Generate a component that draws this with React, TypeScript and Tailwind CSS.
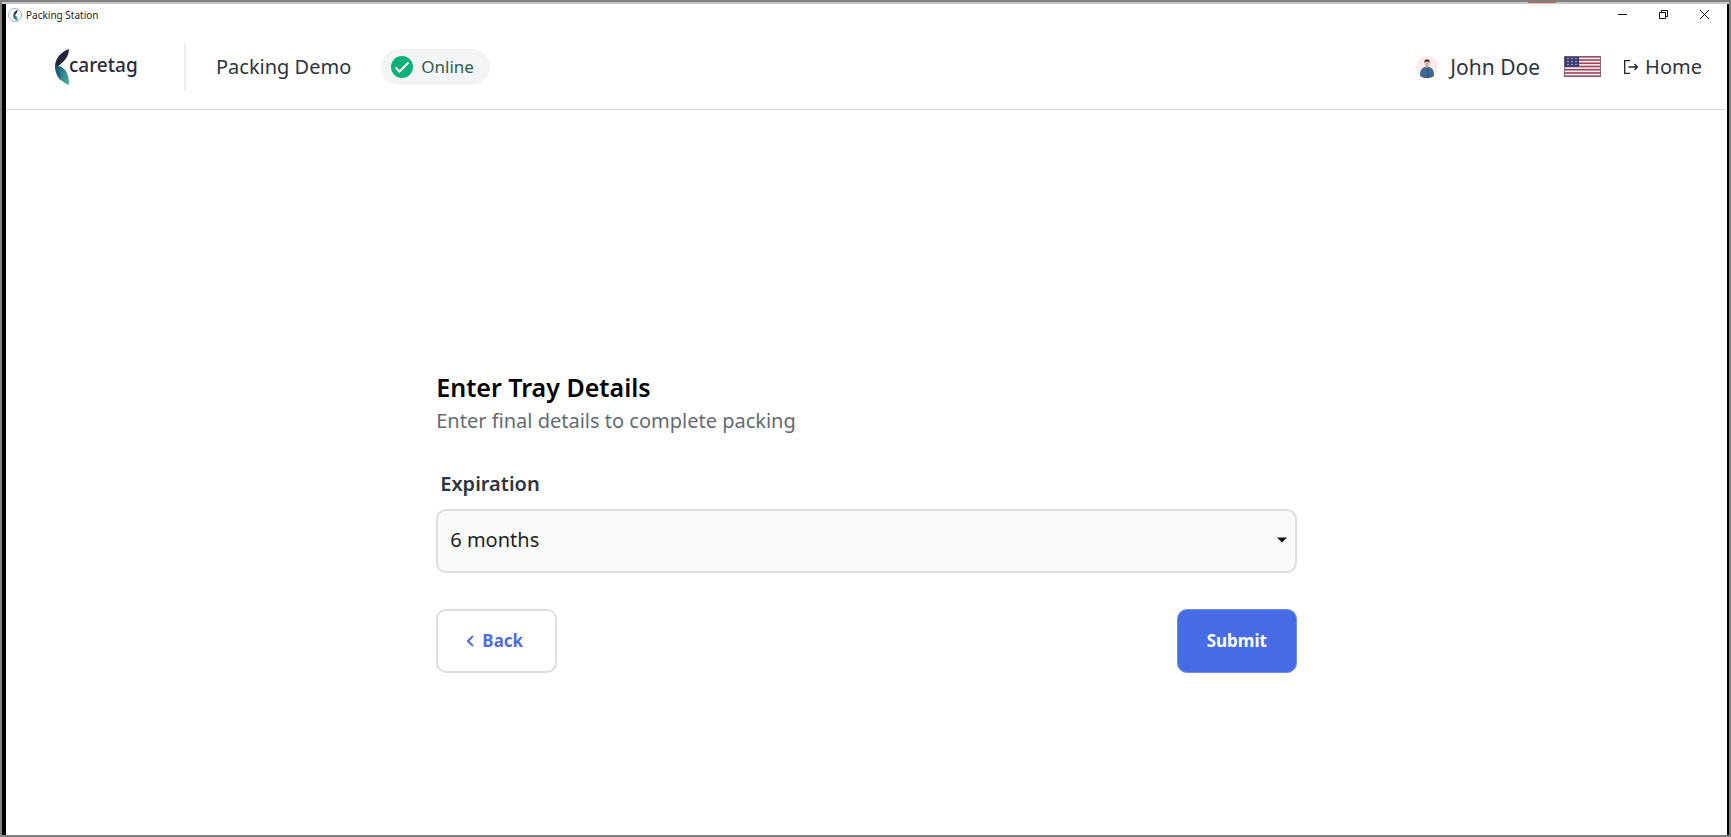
import { type ReactNode } from 'react'

const Leaf = ({ className }: { className: string }) => (
  <svg className={className} viewBox="0 0 14 36" aria-hidden="true">
    <defs>
      <linearGradient id="leaf" x1="0" y1="0" x2="1" y2="1">
        <stop offset="0" stopColor="#1d4a7c" />
        <stop offset="0.4" stopColor="#2b7f86" />
        <stop offset="1" stopColor="#4fb5a6" />
      </linearGradient>
    </defs>
    <path d="M14 0C6 3 0 9 0 18c2 0 5-2 8-5 4-4 6-8 6-13z" fill="#23233a" />
    <path d="M0 17c0 9 6 16 14 19 0-7-1-12-5-16-3-3-6-4-9-3z" fill="url(#leaf)" />
    <path d="M0 16c0 7 2 12 6 16 0-6-2-12-6-16z" fill="#1f4f86" opacity="0.6" />
  </svg>
)

const CheckCircle = () => (
  <svg className="size-[22px]" viewBox="0 0 22 22" aria-hidden="true">
    <circle cx="11" cy="11" r="11" fill="#10b07c" />
    <path d="M4.5 11.5l4 4 9-9" fill="none" stroke="#fff" strokeWidth="2" />
  </svg>
)

const Avatar = () => (
  <svg className="size-[22px]" viewBox="0 0 22 22" aria-hidden="true">
    <circle cx="11" cy="11" r="11" fill="#fdeaea" />
    <path d="M4 20c0-5 1-8 5-9h4c4 1 5 4 5 9-4 3-10 3-14 0z" fill="#41698f" />
    <path d="M11.5 12v10" stroke="#2f5273" strokeWidth="0.8" />
    <path d="M9.5 8h3v3L11 12l-1.500-1z" fill="#d99a86" />
    <rect x="9" y="4.5" width="4.5" height="5" rx="2" fill="#e8b09c" />
    <path d="M8.5 7c-.5-3 .8-3.500 2.500-3.500s3 .5 2.500 3.500l-.7-1.500H9.300z" fill="#2a1f26" />
  </svg>
)

const stripes = [0, 1, 2, 3, 4, 5, 6]

const UsFlag = () => (
  <svg className="h-[21px] w-[37px]" viewBox="0 0 37 21" role="img" aria-label="English (US)">
    <rect width="37" height="21" fill="#fbeef1" />
    {stripes.map((n) => (
      <rect key={n} y={n * 3.23} width="37" height="1.6" fill="#9c4458" />
    ))}
    <rect width="15" height="11" fill="#3b3a72" />
    {[2.5, 5.5, 8.5].map((y) =>
      [4, 8, 12].map((x) => <circle key={`${x}-${y}`} cx={x} cy={y} r="0.7" fill="#d5d5ea" />),
    )}
    <rect x="0.5" y="0.5" width="36" height="20" fill="none" stroke="#6f6570" strokeOpacity="0.8" />
  </svg>
)

const WindowButton = ({ label, children }: { label: string; children: ReactNode }) => (
  <button type="button" aria-label={label} className="flex h-5 w-[41px] items-center justify-center">
    <svg className="size-[11px]" viewBox="0 0 11 11" fill="none" stroke="#111" aria-hidden="true">
      {children}
    </svg>
  </button>
)

const TitleBar = () => (
  <div className="flex h-5 items-center justify-between pl-[2px]">
    <div className="flex items-center gap-1 pt-[2px]">
      <span className="flex size-[14px] items-center justify-center rounded-full border border-[#9db3d6] bg-white">
        <Leaf className="h-[11px] w-[5px]" />
      </span>
      <span className="text-[10px] leading-4 text-[#222]">Packing Station</span>
    </div>
    <div className="flex pr-[2px]">
      <WindowButton label="Minimize">
        <path d="M1 5.5h9" />
      </WindowButton>
      <WindowButton label="Restore">
        <path d="M1.5 3.5h6v6h-6zM3.5 3.5v-2h6v6h-2" />
      </WindowButton>
      <WindowButton label="Close">
        <path d="M1 1l9 9M10 1l-9 9" />
      </WindowButton>
    </div>
  </div>
)

const Header = () => (
  <header className="flex h-[86px] items-center justify-between border-b border-[#dcdee0] pr-[25px] pl-[49px] text-[#2d3540]">
    <div className="flex items-center">
      <div className="flex h-12 w-[131px] items-center border-r-2 border-[#eceef0]">
        <Leaf className="h-9 w-[14px]" />
        <span className="pb-1 text-[19px] leading-6 font-medium text-[#2b2b3b]">caretag</span>
      </div>
      <span className="ml-[30px] text-[20px] leading-8">Packing Demo</span>
      <span className="ml-[30px] flex h-9 items-center gap-2 rounded-full bg-[#f2f4f6] pr-4 pl-[10px]">
        <CheckCircle />
        <span className="text-[17px] leading-6 text-[#2f6148]">Online</span>
      </span>
    </div>
    <div className="flex items-center text-[20px] leading-8">
      <Avatar />
      <span className="ml-3 text-[21px]">John Doe</span>
      <button type="button" className="ml-6">
        <UsFlag />
      </button>
      <a href="#home" className="ml-[22px] flex items-center gap-[6px]">
        <svg className="size-4" viewBox="0 0 16 16" fill="none" stroke="#222" strokeWidth="1.3" aria-hidden="true">
          <path d="M7 1.700H1.700v12.600H7M5.500 8h9M11.500 5l3 3-3 3" />
        </svg>
        Home
      </a>
    </div>
  </header>
)

const TrayForm = () => (
  <form className="mx-auto w-1/2 pt-[259px]" onSubmit={(e) => e.preventDefault()}>
    <h1 className="text-[25px] leading-9 font-semibold text-black">Enter Tray Details</h1>
    <p className="text-[20px] leading-8 text-[#646b74]">Enter final details to complete packing</p>
    <label htmlFor="expiration" className="mt-8 block pl-1 text-[20px] leading-[30px] font-semibold text-[#2d3540]">
      Expiration
    </label>
    <div className="relative mt-[10px]">
      <select
        id="expiration"
        defaultValue="6"
        className="h-16 w-full appearance-none rounded-[10px] border-2 border-[#dddee3] bg-[#f9fafc] px-3 pb-[2px] text-[20px] text-[#1f1f1f]"
      >
        <option value="3">3 months</option>
        <option value="6">6 months</option>
        <option value="12">12 months</option>
      </select>
      <svg className="pointer-events-none absolute top-7 right-[10px] h-[6px] w-[10px]" viewBox="0 0 10 6" aria-hidden="true">
        <path d="M0 .5h10l-5 5z" fill="#111" />
      </svg>
    </div>
    <div className="mt-9 flex justify-between text-[17px] font-bold">
      <button
        type="button"
        className="flex h-16 w-[121px] items-center justify-center gap-2 rounded-[10px] border-2 border-[#dddee3] pr-1 text-[#4f6fd6]"
      >
        <svg className="h-3 w-2" viewBox="0 0 8 12" fill="none" stroke="currentColor" strokeWidth="2" aria-hidden="true">
          <path d="M7 1L2 6l5 5" />
        </svg>
        Back
      </button>
      <button type="submit" className="h-16 w-[120px] rounded-[10px] border border-[#6f8de9] bg-[#466de6] text-white">
        Submit
      </button>
    </div>
  </form>
)

export default function App() {
  return (
    <div className="flex min-h-screen flex-col border-2 border-[#7f7f7f] bg-white font-['Noto_Sans',sans-serif]">
      <div className="h-[2px] bg-[#c8c8c8]">
        <div className="mr-[173px] ml-auto h-px w-7 bg-[#d0605a]" />
      </div>
      <div className="flex grow flex-col border-r-2 border-l-4 border-black">
        <TitleBar />
        <Header />
        <main className="grow">
          <TrayForm />
        </main>
      </div>
    </div>
  )
}
